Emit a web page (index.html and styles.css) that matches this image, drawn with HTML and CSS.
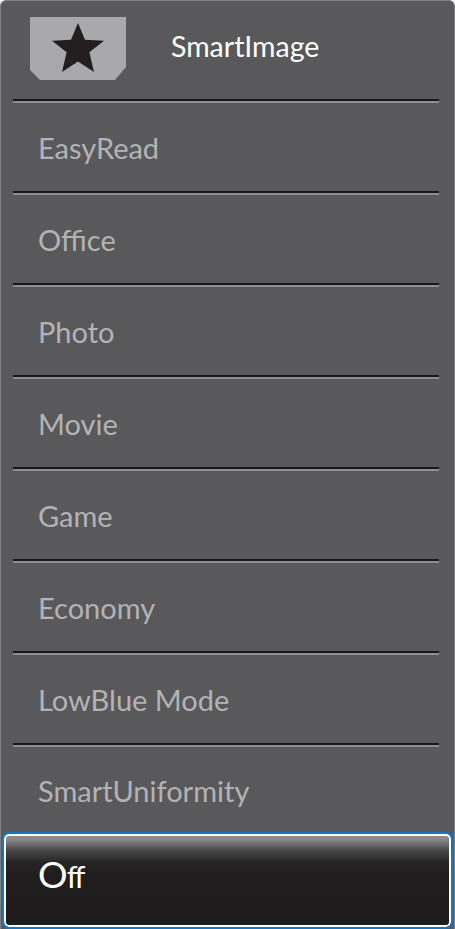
FILE: index.html
```html
<!DOCTYPE html>
<html lang="en">
<head>
  <meta charset="UTF-8">
  <meta name="viewport" content="width=device-width, initial-scale=1.0">
  <title>SmartImage</title>
  <link rel="stylesheet" href="styles.css">
</head>
<body>
  <div class="osd">
    <div class="osd-head">
      <span class="icon-box">
        <svg width="96" height="63" viewBox="0 0 96 63">
          <polygon class="icon-plate" points="0,0 96,0 96,50 85,63 10,63 0,53"/>
          <polygon class="icon-star" points="48,6 55,22.7 74,23.7 59.4,35.3 64,55 48,44.5 32,55 36.6,35.3 22,23.7 41,22.7"/>
        </svg>
      </span>
      <span class="head-title">SmartImage</span>
    </div>

    <ul class="osd-list">
      <li class="osd-item">EasyRead</li>
      <li class="osd-item">Office</li>
      <li class="osd-item">Photo</li>
      <li class="osd-item">Movie</li>
      <li class="osd-item">Game</li>
      <li class="osd-item">Economy</li>
      <li class="osd-item">LowBlue Mode</li>
      <li class="osd-item osd-item-last">SmartUniformity</li>
    </ul>

    <div class="osd-selected">O<span class="ff">ff</span></div>
  </div>
</body>
</html>
```
FILE: styles.css
```css
body {
  margin: 0;
  background: #ffffff;
  font-family: Lato, "Open Sans", sans-serif;
}
.osd {
  width: 455px;
  height: 929px;
  box-sizing: border-box;
  background-color: #59595b;
  border: 1px solid #807f82;
  border-bottom: none;
  border-radius: 6px 6px 0 0;
  display: flex;
  flex-direction: column;
  overflow: hidden;
}
.osd-head {
  height: 98px;
  display: flex;
  align-items: flex-start;
}
.icon-box {
  margin: 16px 0 0 29px;
  width: 96px;
  height: 63px;
}
.icon-box svg {
  display: block;
}
.icon-plate {
  fill: #a9a9ac;
}
.icon-star {
  fill: #231f20;
}
.head-title {
  margin: 27px 0 0 45px;
  font-size: 28.5px;
  line-height: 36px;
  color: #ffffff;
}
.osd-list {
  list-style: none;
  margin: 0;
  padding: 0;
}
.osd-item {
  height: 92px;
  box-sizing: border-box;
  margin: 0 15px 0 12px;
  padding: 3px 0 0 25px;
  border-top: 2px solid #19191a;
  box-shadow: inset 0 2px 0 #8e8e90;
  display: flex;
  align-items: center;
  font-size: 29px;
  color: #b3b3b5;
}
.osd-item-last {
  height: 89px;
}
.osd-selected {
  height: 97px;
  box-sizing: border-box;
  margin: 0 1px 0 1px;
  padding: 0 0 14px 34px;
  border: 2px solid #1776c0;
  border-radius: 7px;
  box-shadow: inset 0 0 0 2px #ffffff;
  background: linear-gradient(to bottom, #8c8c8e 0, #8a8a8c 5px, #4a494a 16px, #262425 28px, #1f1d1e 40px, #1e1c1d 100%);
  display: flex;
  align-items: center;
  font-size: 37px;
  color: #ffffff;
}
.ff {
  font-size: 31px;
  letter-spacing: -3px;
  margin-left: -1px;
  margin-top: 5px;
}
```
